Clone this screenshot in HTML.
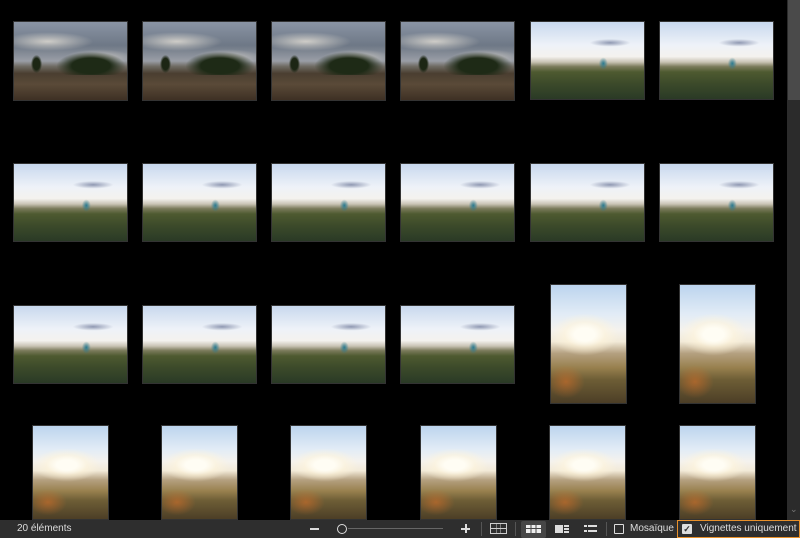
<!DOCTYPE html>
<html style="overflow:hidden;width:800px;height:538px"><head><meta charset="utf-8"><style>
*{margin:0;padding:0;box-sizing:border-box}
body{width:800px;height:538px;background:#000;position:relative;overflow:hidden;font-family:"Liberation Sans",sans-serif}
.t{position:absolute;border:1px solid #333}
.a{width:115px;height:80px;background:
 radial-gradient(ellipse 40% 12% at 30% 25%,rgba(230,225,215,.8),transparent),
 radial-gradient(ellipse 30% 10% at 75% 45%,rgba(220,215,205,.7),transparent),
 linear-gradient(180deg,#8a94a4 0%,#6e7886 30%,#9a9ea6 50%,#6e6a62 57%,#4a3e30 66%,#5a4a38 80%,#3e3024 100%)}
.a::after{content:"";position:absolute;left:38%;top:38%;width:60%;height:30%;background:radial-gradient(ellipse at 50% 60%,#1e2a16 40%,transparent 72%)}
.a::before{content:"";position:absolute;left:15%;top:42%;width:10%;height:24%;background:radial-gradient(ellipse,#1c2614 45%,transparent 72%)}
.b{width:115px;height:79px;background:
 radial-gradient(ellipse 4% 8% at 64% 54%,#2a7a90,transparent),
 radial-gradient(ellipse 18% 5% at 70% 27%,rgba(120,130,160,.8),transparent),
 linear-gradient(180deg,#c8d8ee 0%,#eef2f8 30%,#f4f2ee 45%,#c9c3b4 52%,#7a7a5a 58%,#4e5a30 65%,#3c4a2a 80%,#2a3a26 100%)}
.p{width:77px;height:120px;background:
 radial-gradient(ellipse 45% 18% at 45% 42%,#fffdf4 30%,rgba(255,245,220,.6) 60%,transparent),
 radial-gradient(ellipse 25% 14% at 20% 82%,rgba(210,110,40,.6),transparent),
 linear-gradient(180deg,#bcd4ee 0%,#e2ecf6 25%,#f4f2ee 38%,#f2ead8 48%,#b4a080 58%,#98804e 70%,#6e5e36 80%,#4c3e26 100%)}
.bar{position:absolute;left:0;top:520px;width:800px;height:18px;background:#2e2e2e;color:#ddd;font-size:10px;z-index:5}
.bar span{position:absolute;top:3px}
.sb{position:absolute;left:787px;top:0;width:13px;height:520px;background:#2b2b2b}
.th{position:absolute;left:788px;top:0;width:12px;height:100px;background:#4a4a4a}
.ic{position:absolute;background:#ddd}
</style></head><body>
<div class="t a" style="left:13px;top:21px"></div>
<div class="t a" style="left:142px;top:21px"></div>
<div class="t a" style="left:271px;top:21px"></div>
<div class="t a" style="left:400px;top:21px"></div>
<div class="t b" style="left:530px;top:21px"></div>
<div class="t b" style="left:659px;top:21px"></div>

<div class="t b" style="left:13px;top:163px"></div>
<div class="t b" style="left:142px;top:163px"></div>
<div class="t b" style="left:271px;top:163px"></div>
<div class="t b" style="left:400px;top:163px"></div>
<div class="t b" style="left:530px;top:163px"></div>
<div class="t b" style="left:659px;top:163px"></div>

<div class="t b" style="left:13px;top:305px"></div>
<div class="t b" style="left:142px;top:305px"></div>
<div class="t b" style="left:271px;top:305px"></div>
<div class="t b" style="left:400px;top:305px"></div>
<div class="t p" style="left:550px;top:284px"></div>
<div class="t p" style="left:679px;top:284px"></div>

<div class="t p" style="left:32px;top:425px;height:95px"></div>
<div class="t p" style="left:161px;top:425px;height:95px"></div>
<div class="t p" style="left:290px;top:425px;height:95px"></div>
<div class="t p" style="left:420px;top:425px;height:95px"></div>
<div class="t p" style="left:549px;top:425px;height:95px"></div>
<div class="t p" style="left:679px;top:425px;height:95px"></div>

<div class="sb"></div><div class="th"></div>
<div style="position:absolute;left:790px;top:504px;color:#777;font-size:9px">&#8964;</div>

<div class="bar">
<span style="left:17px">20 éléments</span>
<div class="ic" style="left:310px;top:8px;width:9px;height:1.5px"></div>
<div style="position:absolute;left:337px;top:4px;width:10px;height:10px;border:1.5px solid #ddd;border-radius:50%"></div>
<div style="position:absolute;left:348px;top:8px;width:95px;height:1px;background:#666"></div>
<div class="ic" style="left:461px;top:8px;width:9px;height:1.5px"></div>
<div class="ic" style="left:465px;top:4px;width:1.5px;height:9px"></div>
<div style="position:absolute;left:481px;top:2px;width:1px;height:14px;background:#555"></div>
<div style="position:absolute;left:490px;top:3px;width:17px;height:11px;border:1.5px solid #ccc;background:linear-gradient(90deg,transparent 32%,#ccc 32%,#ccc 38%,transparent 38%,transparent 62%,#ccc 62%,#ccc 68%,transparent 68%),linear-gradient(180deg,transparent 42%,#ccc 42%,#ccc 58%,transparent 58%)"></div>
<div style="position:absolute;left:515px;top:2px;width:1px;height:14px;background:#555"></div>
<div style="position:absolute;left:521px;top:1px;width:25px;height:17px;background:#474747;border-radius:2px"></div>
<div style="position:absolute;left:526px;top:5px;width:15px;height:8px;background:linear-gradient(90deg,#eee 30%,transparent 30%,transparent 36%,#eee 36%,#eee 64%,transparent 64%,transparent 70%,#eee 70%)"></div>
<div style="position:absolute;left:526px;top:8px;width:15px;height:1px;background:#474747"></div>
<div class="ic" style="left:555px;top:5px;width:8px;height:8px"></div>
<div class="ic" style="left:564px;top:5px;width:5px;height:1.5px"></div>
<div class="ic" style="left:564px;top:8px;width:5px;height:1.5px"></div>
<div class="ic" style="left:564px;top:11px;width:5px;height:1.5px"></div>
<div class="ic" style="left:584px;top:5px;width:3px;height:2px"></div>
<div class="ic" style="left:588px;top:5px;width:9px;height:1.5px"></div>
<div class="ic" style="left:584px;top:10px;width:3px;height:2px"></div>
<div class="ic" style="left:588px;top:10px;width:9px;height:1.5px"></div>
<div style="position:absolute;left:606px;top:2px;width:1px;height:14px;background:#555"></div>
<div style="position:absolute;left:614px;top:4px;width:10px;height:10px;border:1.5px solid #ddd;border-radius:1px"></div>
<span style="left:630px">Mosaïque</span>
<div style="position:absolute;left:677px;top:0;width:123px;height:18px;border:1.5px solid #e8902a"></div>
<div style="position:absolute;left:682px;top:4px;width:10px;height:10px;background:#ddd;border-radius:1px;color:#2e2e2e;font-size:9px;line-height:10px;text-align:center;font-weight:bold">✓</div>
<span style="left:700px">Vignettes uniquement</span>
</div>
</body></html>
